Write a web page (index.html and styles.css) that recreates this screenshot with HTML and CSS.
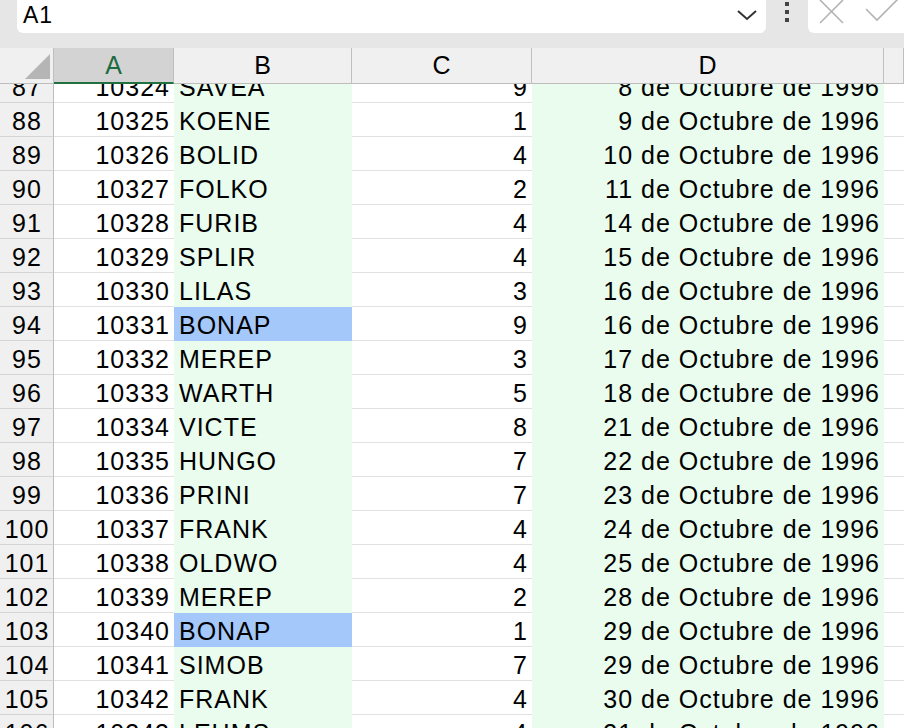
FILE: index.html
```html
<!DOCTYPE html>
<html>
<head>
<title>Hoja</title>
<meta charset="UTF-8">
<link rel="stylesheet" href="styles.css">
</head>
<body>

<!-- *********************************************************
FORMULA BAR
********************************************************** -->
<div class="topbar">
	<div class="namebox">
		<span class="ref">A1</span>
		<svg class="chev" width="22" height="14" viewBox="0 0 22 14"><path d="M2 3 L11 11 L20 3" fill="none" stroke="#333" stroke-width="2"/></svg>
	</div>
	<div class="grip">
		<span></span><span></span><span></span>
	</div>
	<div class="fxbox">
		<svg class="cancel" width="26" height="26" viewBox="0 0 26 26"><path d="M1 1 L24 24 M24 1 L1 24" fill="none" stroke="#b3b3b3" stroke-width="1.6"/></svg>
		<svg class="enter" width="34" height="26" viewBox="0 0 34 26"><path d="M1 11 L12 22 L33 1" fill="none" stroke="#b3b3b3" stroke-width="1.6"/></svg>
	</div>
</div>

<!-- *********************************************************
GRID
********************************************************** -->
<div class="colheads">
	<div class="corner"><span class="tri"></span></div>
	<div class="ch sel">A</div>
	<div class="ch">B</div>
	<div class="ch">C</div>
	<div class="ch">D</div>
	<div class="ch"></div>
</div>

<div class="sheet">
<div class="rows">
	<div class="row"><div class="rh">87</div><div class="c num">10324</div><div class="c g">SAVEA</div><div class="c num">9</div><div class="c g num">8 de Octubre de 1996</div><div class="c"></div></div>
	<div class="row"><div class="rh">88</div><div class="c num">10325</div><div class="c g">KOENE</div><div class="c num">1</div><div class="c g num">9 de Octubre de 1996</div><div class="c"></div></div>
	<div class="row"><div class="rh">89</div><div class="c num">10326</div><div class="c g">BOLID</div><div class="c num">4</div><div class="c g num">10 de Octubre de 1996</div><div class="c"></div></div>
	<div class="row"><div class="rh">90</div><div class="c num">10327</div><div class="c g">FOLKO</div><div class="c num">2</div><div class="c g num">11 de Octubre de 1996</div><div class="c"></div></div>
	<div class="row"><div class="rh">91</div><div class="c num">10328</div><div class="c g">FURIB</div><div class="c num">4</div><div class="c g num">14 de Octubre de 1996</div><div class="c"></div></div>
	<div class="row"><div class="rh">92</div><div class="c num">10329</div><div class="c g">SPLIR</div><div class="c num">4</div><div class="c g num">15 de Octubre de 1996</div><div class="c"></div></div>
	<div class="row"><div class="rh">93</div><div class="c num">10330</div><div class="c g">LILAS</div><div class="c num">3</div><div class="c g num">16 de Octubre de 1996</div><div class="c"></div></div>
	<div class="row"><div class="rh">94</div><div class="c num">10331</div><div class="c hl">BONAP</div><div class="c num">9</div><div class="c g num">16 de Octubre de 1996</div><div class="c"></div></div>
	<div class="row"><div class="rh">95</div><div class="c num">10332</div><div class="c g">MEREP</div><div class="c num">3</div><div class="c g num">17 de Octubre de 1996</div><div class="c"></div></div>
	<div class="row"><div class="rh">96</div><div class="c num">10333</div><div class="c g">WARTH</div><div class="c num">5</div><div class="c g num">18 de Octubre de 1996</div><div class="c"></div></div>
	<div class="row"><div class="rh">97</div><div class="c num">10334</div><div class="c g">VICTE</div><div class="c num">8</div><div class="c g num">21 de Octubre de 1996</div><div class="c"></div></div>
	<div class="row"><div class="rh">98</div><div class="c num">10335</div><div class="c g">HUNGO</div><div class="c num">7</div><div class="c g num">22 de Octubre de 1996</div><div class="c"></div></div>
	<div class="row"><div class="rh">99</div><div class="c num">10336</div><div class="c g">PRINI</div><div class="c num">7</div><div class="c g num">23 de Octubre de 1996</div><div class="c"></div></div>
	<div class="row"><div class="rh">100</div><div class="c num">10337</div><div class="c g">FRANK</div><div class="c num">4</div><div class="c g num">24 de Octubre de 1996</div><div class="c"></div></div>
	<div class="row"><div class="rh">101</div><div class="c num">10338</div><div class="c g">OLDWO</div><div class="c num">4</div><div class="c g num">25 de Octubre de 1996</div><div class="c"></div></div>
	<div class="row"><div class="rh">102</div><div class="c num">10339</div><div class="c g">MEREP</div><div class="c num">2</div><div class="c g num">28 de Octubre de 1996</div><div class="c"></div></div>
	<div class="row"><div class="rh">103</div><div class="c num">10340</div><div class="c hl">BONAP</div><div class="c num">1</div><div class="c g num">29 de Octubre de 1996</div><div class="c"></div></div>
	<div class="row"><div class="rh">104</div><div class="c num">10341</div><div class="c g">SIMOB</div><div class="c num">7</div><div class="c g num">29 de Octubre de 1996</div><div class="c"></div></div>
	<div class="row"><div class="rh">105</div><div class="c num">10342</div><div class="c g">FRANK</div><div class="c num">4</div><div class="c g num">30 de Octubre de 1996</div><div class="c"></div></div>
	<div class="row"><div class="rh">106</div><div class="c num">10343</div><div class="c g">LEHMS</div><div class="c num">4</div><div class="c g num">31 de Octubre de 1996</div><div class="c"></div></div>
</div>
</div>

</body>
</html>
```

FILE: styles.css
```css
body{
	margin: 0px;
	font-family: "Liberation Sans", Arial, sans-serif;
	color: #000;
	background: #fff;
	overflow: hidden;
}

/*********************************************************
FORMULA BAR
**********************************************************/

.topbar{
	display: flex;
	align-items: flex-start;
	height: 48px;
	background: #e6e6e6;
}

.namebox{
	display: flex;
	align-items: center;
	justify-content: space-between;
	margin-left: 17px;
	width: 749px;
	height: 33px;
	background: #fff;
	border-radius: 0 0 6px 6px;
	padding: 0 8px 0 6px;
	box-sizing: border-box;
}

.ref{
	font-size: 23px;
	line-height: 28px;
	margin-top: -4px;
	letter-spacing: 1px;
}

.chev{
	margin-top: -4px;
}

.grip{
	width: 42px;
	height: 33px;
	display: flex;
	flex-direction: column;
	align-items: center;
	gap: 4px;
	padding-top: 2px;
	box-sizing: border-box;
}

.grip span{
	display: block;
	width: 4px;
	height: 4px;
	background: #444;
}

.fxbox{
	flex: 1;
	height: 33px;
	background: #fff;
	border-radius: 0 0 0 6px;
	display: flex;
	align-items: flex-start;
	gap: 20px;
	padding-left: 11px;
}

.cancel{
	margin-top: -1px;
}

.enter{
	margin-top: -2px;
}

/*********************************************************
GRID
**********************************************************/

.colheads,
.row{
	display: grid;
	grid-template-columns: 54px 120px 178px 180px 352px 1fr;
}

.colheads{
	height: 34px;
	position: relative;
	z-index: 1;
}

.corner,
.ch{
	background: #f0f0f0;
	border-right: 1px solid #bfbfbf;
	border-bottom: 1px solid #bdbdbd;
	box-sizing: border-box;
	font-size: 25px;
	line-height: 34px;
	text-align: center;
}

.corner{
	position: relative;
}

.tri{
	position: absolute;
	right: 3px;
	bottom: 4px;
	width: 0;
	height: 0;
	border-left: 25px solid transparent;
	border-bottom: 25px solid #b5b5b5;
}

.ch.sel{
	background: #d3d3d3;
	color: #1d6b40;
	border-bottom: 2px solid #21703f;
}

.sheet{
	height: 646px;
	overflow: hidden;
}

.rows{
	margin-top: -13px;
}

.row{
	height: 34px;
}

.rh,
.c{
	box-sizing: border-box;
	height: 34px;
	font-size: 25px;
	line-height: 36px;
	letter-spacing: 1px;
	white-space: nowrap;
	overflow: hidden;
	border-bottom: 1px solid #e1e1e1;
}

.rh{
	background: #f0f0f0;
	border-right: 1px solid #bdbdbd;
	border-bottom-color: #d4d4d4;
	text-align: center;
	padding-left: 1px;
}

.c{
	padding: 0 4px 0 5px;
}

.num{
	text-align: right;
}

.g{
	background: #e9fcee;
	border-bottom-color: #e9fcee;
}

.hl{
	background: #a5c8fb;
	border-bottom-color: #a5c8fb;
}
```
